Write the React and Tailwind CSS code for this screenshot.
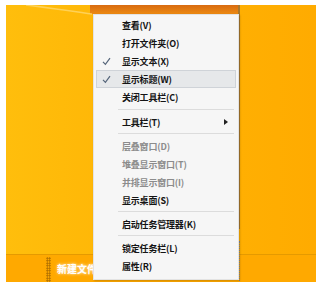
const font = { fontFamily: '"Noto Sans CJK SC", "Noto Sans", sans-serif' };

const groups = [
  [
    { label: "查看(V)" },
    { label: "打开文件夹(O)" },
    { label: "显示文本(X)", checked: true },
    { label: "显示标题(W)", checked: true, hover: true },
    { label: "关闭工具栏(C)" },
  ],
  [{ label: "工具栏(T)", sub: true }],
  [
    { label: "层叠窗口(D)", disabled: true },
    { label: "堆叠显示窗口(T)", disabled: true },
    { label: "并排显示窗口(I)", disabled: true },
    { label: "显示桌面(S)" },
  ],
  [{ label: "启动任务管理器(K)" }],
  [{ label: "锁定任务栏(L)" }, { label: "属性(R)" }],
];

function Check({ hover }) {
  return (
    <svg
      width="9"
      height="9"
      viewBox="0 0 9 9"
      className={"absolute " + (hover ? "left-[5px] top-[4px]" : "left-[8px] top-[5px]")}
    >
      <path d="M1 4.8 L3.4 7.4 L8 1.2" fill="none" stroke="#55657a" strokeWidth="1.2" />
    </svg>
  );
}

function Item({ label, checked, hover, disabled, sub }) {
  return (
    <div
      className={
        "relative flex h-[18px] items-center pr-2 " +
        (hover ? "mx-[2px] border border-[#cfd3d8] bg-[#e6e8ea] pl-[25px]" : "pl-[28px]")
      }
    >
      {checked && <Check hover={hover} />}
      <span
        className={
          "text-[9px] font-bold leading-none tracking-[-0.2px] " +
          (disabled ? "text-[#8c8c8c]" : "text-[#141414]")
        }
      >
        {label}
      </span>
      {sub && (
        <svg width="4" height="6" viewBox="0 0 4 6" className="ml-auto mr-[2px]">
          <path d="M0 0 L4 3 L0 6 Z" fill="#222" />
        </svg>
      )}
    </div>
  );
}

function Separator({ tall }) {
  return (
    <div className={"flex items-center pl-[24px] pr-[4px] " + (tall ? "h-[7px]" : "h-[6px]")}>
      <div className="h-[2px] w-full border-t border-[#dcdcdc] border-b-white" />
    </div>
  );
}

export default function App() {
  return (
    <div className="h-[285px] w-[319px] bg-white pl-[6px] pt-[5px]" style={font}>
      <div className="relative flex h-[277px] w-[310px] flex-col overflow-hidden">
        <div className="relative flex-1 bg-gradient-to-r from-[#ffbe0c] via-[#ffb304] to-[#ffab00]">
          {/* window behind the menu */}
          <div className="absolute left-[84px] top-0 h-[9px] w-[150px] bg-gradient-to-b from-[#d86a10] to-[#ec8a12]" />
          <div className="absolute left-[232px] top-0 h-[224px] w-[2px] bg-[#a9782c]" />
          <svg width="90" height="12" viewBox="0 0 90 12" className="absolute left-0 top-0">
            <path d="M20 0 C45 3 65 6 86 9" fill="none" stroke="#ffd76a" strokeWidth="1.5" opacity="0.8" />
          </svg>
        </div>
        <div className="flex h-[28px] items-center gap-[6px] border-t border-[#e59a00] bg-[#ffa900] pl-[40px]">
          <div className="h-[25px] w-[5px] self-end bg-[radial-gradient(circle,#a86a00_0.8px,transparent_1px)] bg-[length:2.5px_2.5px]" />
          <span className="text-[10px] font-bold text-white [text-shadow:0_0_3px_#fff]">新建文件夹</span>
        </div>

        <div className="absolute left-[87px] top-[9px] w-[146px] border border-[#e3e3e3] bg-[#f6f6f6] pb-[4px] pt-[1px] shadow-[1px_1px_2px_rgba(0,0,0,0.2)]">
          {groups.map((g, i) => (
            <div key={i}>
              {i > 0 && <Separator tall={i === 1} />}
              {g.map((it) => (
                <Item key={it.label} {...it} />
              ))}
            </div>
          ))}
          <div className="absolute -right-[2px] top-[226px] h-[42px] border-r border-dotted border-[#777]" />
        </div>
      </div>
    </div>
  );
}
